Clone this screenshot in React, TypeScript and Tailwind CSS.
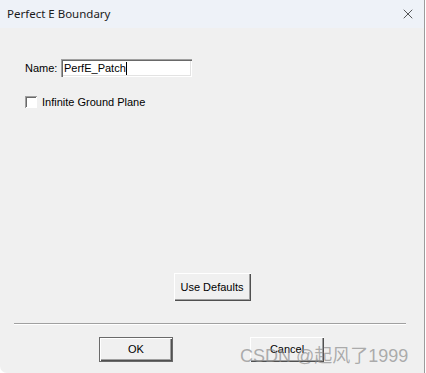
import { X } from "lucide-react";

const sans = "font-['Liberation_Sans',Arial,sans-serif]";

function Btn({ label, def, w }: { label: string; def?: boolean; w: string }) {
  return (
    <div
      className={`${w} flex items-center justify-center bg-[#f0f0f0] text-[11px] text-black ${sans} ${
        def
          ? "border border-[#6a6a6a] shadow-[inset_1px_1px_0_#fff,inset_-1px_-1px_0_#505050,inset_-2px_-2px_0_#a0a0a0]"
          : "shadow-[inset_1px_1px_0_#fff,inset_-1px_-1px_0_#505050,inset_-2px_-2px_0_#a0a0a0]"
      }`}
    >
      {label}
    </div>
  );
}

export default function App() {
  return (
    <div className="w-[426px] h-[373px] bg-white">
      <div className="relative w-[425px] h-[373px] bg-[#f0f0f0] border-r border-[#9c9c9c] rounded-bl-[7px] flex flex-col overflow-hidden">
        <div className="h-[28px] bg-[#eef2f8] flex items-center justify-between pl-[7px] pr-[8px]">
          <span className="text-[11.5px] text-[#1b1b1b] font-['Noto_Sans',sans-serif]">Perfect E Boundary</span>
          <X size={16} strokeWidth={1.1} className="text-[#1b1b1b]" />
        </div>

        <div className="flex flex-col pt-[31px] pl-[25px] flex-1">
          <div className="flex items-center h-[18px]">
            <span className={`w-[36px] text-[11px] text-black ${sans}`}>Name:</span>
            <div className="w-[131px] h-[18px] bg-white flex items-center pl-[3px] shadow-[inset_1px_1px_0_#a0a0a0,inset_2px_2px_0_#696969,inset_-1px_-1px_0_#fff,inset_-2px_-2px_0_#e3e3e3]">
              <span className={`text-[11px] text-black ${sans}`}>PerfE_Patch</span>
              <span className="w-px h-[13px] bg-black" />
            </div>
          </div>

          <div className="flex items-center mt-[17px]">
            <div className="w-[12px] h-[12px] bg-white shadow-[inset_1px_1px_0_#a0a0a0,inset_-1px_-1px_0_#fff,inset_2px_2px_0_#696969]" />
            <span className={`ml-[5px] text-[11px] text-black ${sans}`}>Infinite Ground Plane</span>
          </div>

          <div className="flex-1" />

          <div className="flex justify-center pr-[25px] mb-[22px]">
            <Btn label="Use Defaults" w="w-[77px] h-[28px]" />
          </div>
        </div>

        <div className="ml-[14px] mr-[18px] h-px bg-[#a0a0a0] border-b border-white box-content" />

        <div className="flex justify-center gap-[77px] pt-[12px] pb-[11px] pr-[1px]">
          <Btn label="OK" def w="w-[74px] h-[25px]" />
          <Btn label="Cancel" w="w-[74px] h-[25px]" />
        </div>

        <span className="absolute left-[240px] bottom-[8px] text-[18px] leading-none text-[#8c8c8c]/70 font-['Liberation_Sans','Noto_Sans_CJK_SC',sans-serif]">
          CSDN @起风了1999
        </span>
      </div>
    </div>
  );
}
